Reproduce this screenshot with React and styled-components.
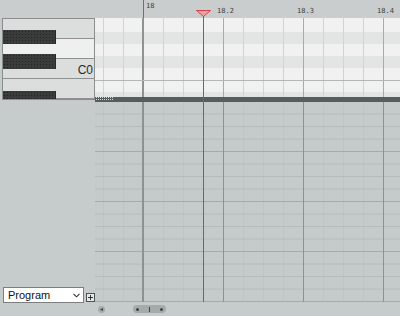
import React from 'react';
import styled, { createGlobalStyle } from 'styled-components';

const GlobalStyle = createGlobalStyle`
  html, body {
    margin: 0;
    padding: 0;
    background: #c6cbcb;
  }
`;

const Editor = styled.div`
  display: flex;
  width: 400px;
  height: 316px;
  overflow: hidden;
  background: #c6cbcb;
  font-family: "Liberation Sans", Arial, sans-serif;
`;

const LeftColumn = styled.div`
  display: flex;
  flex-direction: column;
  width: 95px;
  flex-shrink: 0;
`;

const RulerSpacer = styled.div`
  height: 18px;
  background: #c9cdcd;
`;

const Keyboard = styled.div`
  position: relative;
  display: flex;
  flex-direction: column;
  height: 82px;
  margin-left: 2px;
  box-sizing: border-box;
  border: 1px solid #8a8d8d;
  overflow: hidden;
`;

const WhiteKey = styled.div`
  display: flex;
  align-items: center;
  justify-content: flex-end;
  height: ${(p) => p.$h}px;
  box-sizing: border-box;
  border-bottom: 1px solid #8f9191;
  background: ${(p) => (p.$light ? '#efefef' : '#dcdddd')};
  padding: 3px 1px 0 0;
  font-size: 12px;
  color: #2a2a2a;
`;

const BlackKey = styled.div`
  position: absolute;
  left: 0;
  top: ${(p) => p.$top}px;
  width: 52px;
  height: ${(p) => p.$h}px;
  background-color: #3a3b3b;
  background-image: radial-gradient(#232424 0.6px, transparent 0.8px);
  background-size: 3px 3px;
  border-right: 1px solid #262727;
`;

const LeftPanel = styled.div`
  flex: 1;
  display: flex;
  align-items: flex-end;
  gap: 2px;
  padding: 0 0 13px 3px;
`;

const SelectBox = styled.div`
  display: flex;
  align-items: center;
  justify-content: space-between;
  width: 82px;
  height: 16px;
  box-sizing: border-box;
  padding: 0 3px 0 4px;
  background: #fff;
  border: 1px solid #7b7e7e;
  font-size: 11px;
  color: #111;
`;

const AddButton = styled.div`
  display: flex;
  align-items: center;
  justify-content: center;
  width: 7px;
  height: 7px;
  margin-bottom: 1px;
  border: 1px solid #4f5252;
  background: #e6e8e8;
`;

const RightColumn = styled.div`
  position: relative;
  display: flex;
  flex-direction: column;
  flex: 1;
`;

const Ruler = styled.div`
  position: relative;
  height: 18px;
  background:
    linear-gradient(to right, transparent 48px, #6d7171 48px, #6d7171 49px, transparent 49px),
    #c9cdcd;
  font-family: "DejaVu Sans Mono", "Liberation Mono", monospace;
  font-size: 7px;
  color: #3c3e3e;
`;

const RulerLabel = styled.span`
  position: absolute;
  left: ${(p) => p.$x}px;
  top: ${(p) => p.$y}px;
  line-height: 7px;
`;

const noteLines = `
  linear-gradient(to right, transparent 47px, #8f9292 47px, #8f9292 49px, transparent 49px),
  linear-gradient(to right, #a8abab 0 1px, transparent 1px),
  linear-gradient(to right, #d2d3d3 0 1px, transparent 1px)
`;

const NoteGrid = styled.div`
  display: flex;
  flex-direction: column;
  height: 79px;
  overflow: hidden;
`;

const NoteRow = styled.div`
  flex-shrink: 0;
  height: ${(p) => p.$h}px;
  box-sizing: border-box;
  border-bottom: ${(p) => (p.$octave ? '1px solid #b4b6b6' : 'none')};
  background-color: ${(p) => (p.$dark ? '#e3e4e4' : '#f1f1f1')};
  background-image: ${noteLines};
  background-size: 100% 100%, 80px 100%, 20px 100%;
  background-position: 0 0, 128px 0, 8px 0;
  background-repeat: no-repeat, repeat-x, repeat-x;
`;

const Divider = styled.div`
  display: flex;
  align-items: flex-start;
  height: 5px;
  background: #575c5c;
`;

const Grip = styled.div`
  width: 17px;
  height: 1px;
  margin: 0 0 0 1px;
  border-top: 1px dotted #d3d7d7;
  border-bottom: 1px dotted #d3d7d7;
`;

const ControllerLane = styled.div`
  height: 200px;
  background-color: #c5cbcb;
  background-image:
    linear-gradient(to right, transparent 47px, #8c9292 47px, #8c9292 49px, transparent 49px),
    linear-gradient(to right, #8c9292 0 1px, transparent 1px),
    linear-gradient(to bottom, transparent 49px, #a5abab 49px, #a5abab 50px, transparent 50px),
    linear-gradient(to bottom, transparent 12px, #b5bbbb 12px, #b5bbbb 13px, transparent 13px),
    linear-gradient(to right, #bfc5c5 0 1px, transparent 1px);
  background-size: 100% 100%, 80px 100%, 100% 50px, 100% 12.5px, 20px 100%;
  background-position: 0 0, 128px 0, 0 0, 0 0, 8px 0;
  background-repeat: no-repeat, repeat-x, repeat-y, repeat-y, repeat-x;
`;

const ScrollRow = styled.div`
  display: flex;
  align-items: center;
  height: 14px;
  padding-left: 3px;
  gap: 28px;
`;

const ScrollButton = styled.div`
  display: flex;
  align-items: center;
  justify-content: center;
  width: 7px;
  height: 7px;
  border-radius: 50%;
  background: #a5abab;
`;

const Thumb = styled.div`
  display: flex;
  align-items: center;
  justify-content: space-between;
  width: 33px;
  height: 8px;
  box-sizing: border-box;
  padding: 0 3px;
  border-radius: 4px;
  background: #a5abab;
`;

const Dot = styled.span`
  width: 3px;
  height: 3px;
  border-radius: 50%;
  background: #3f4343;
`;

const Notch = styled.span`
  width: 1px;
  height: 5px;
  background: #3f4343;
`;

const Playhead = styled.div`
  position: absolute;
  z-index: 2;
  left: 100px;
  top: 9px;
  display: flex;
  flex-direction: column;
  align-items: center;
  width: 17px;
  height: 293px;
`;

const PlayheadLine = styled.div`
  flex: 1;
  width: 1px;
  margin-top: -1px;
  background: #e0353d;
`;

const rows = [
  { h: 12 },
  { h: 12 },
  { h: 12, dark: true },
  { h: 12 },
  { h: 12, dark: true },
  { h: 13, octave: true },
  { h: 11 },
  { h: 12, dark: true },
];

const App = () => (
  <>
    <GlobalStyle />
    <Editor>
      <LeftColumn>
        <RulerSpacer />
        <Keyboard>
          <WhiteKey $h={20} />
          <WhiteKey $h={21} $light />
          <WhiteKey $h={21}>C0</WhiteKey>
          <WhiteKey $h={20} />
          <BlackKey $top={11} $h={14} />
          <BlackKey $top={35} $h={15} />
          <BlackKey $top={72} $h={12} />
        </Keyboard>
        <LeftPanel>
          <SelectBox>
            <span>Program</span>
            <svg width="7" height="5" viewBox="0 0 7 5">
              <path d="M0.5 0.8 L3.5 3.8 L6.5 0.8" fill="none" stroke="#333" strokeWidth="1.1" />
            </svg>
          </SelectBox>
          <AddButton>
            <svg width="5" height="5" viewBox="0 0 5 5">
              <path d="M2.5 0 V5 M0 2.5 H5" stroke="#333" strokeWidth="1" />
            </svg>
          </AddButton>
        </LeftPanel>
      </LeftColumn>
      <RightColumn>
        <Ruler>
          <RulerLabel $x={51} $y={3}>18</RulerLabel>
          <RulerLabel $x={122} $y={8}>18.2</RulerLabel>
          <RulerLabel $x={202} $y={8}>18.3</RulerLabel>
          <RulerLabel $x={282} $y={8}>18.4</RulerLabel>
        </Ruler>
        <NoteGrid>
          <div style={{ marginTop: -10 }} />
          {rows.map((r, i) => (
            <NoteRow key={i} $h={r.h} $dark={r.dark} $octave={r.octave} />
          ))}
        </NoteGrid>
        <Divider>
          <Grip />
        </Divider>
        <ControllerLane />
        <ScrollRow>
          <ScrollButton>
            <svg width="3" height="3" viewBox="0 0 3 3">
              <path d="M0 1.5 L3 0 V3 Z" fill="#3f4343" />
            </svg>
          </ScrollButton>
          <Thumb>
            <Dot />
            <Notch />
            <Dot />
          </Thumb>
        </ScrollRow>
        <Playhead>
          <svg width="17" height="8" viewBox="0 0 17 8">
            <polygon points="1.5,1.5 15.5,1.5 8.5,7.5" fill="#eaa2a2" stroke="#d0454a" strokeWidth="1" />
          </svg>
          <PlayheadLine />
        </Playhead>
      </RightColumn>
    </Editor>
  </>
);

export default App;
